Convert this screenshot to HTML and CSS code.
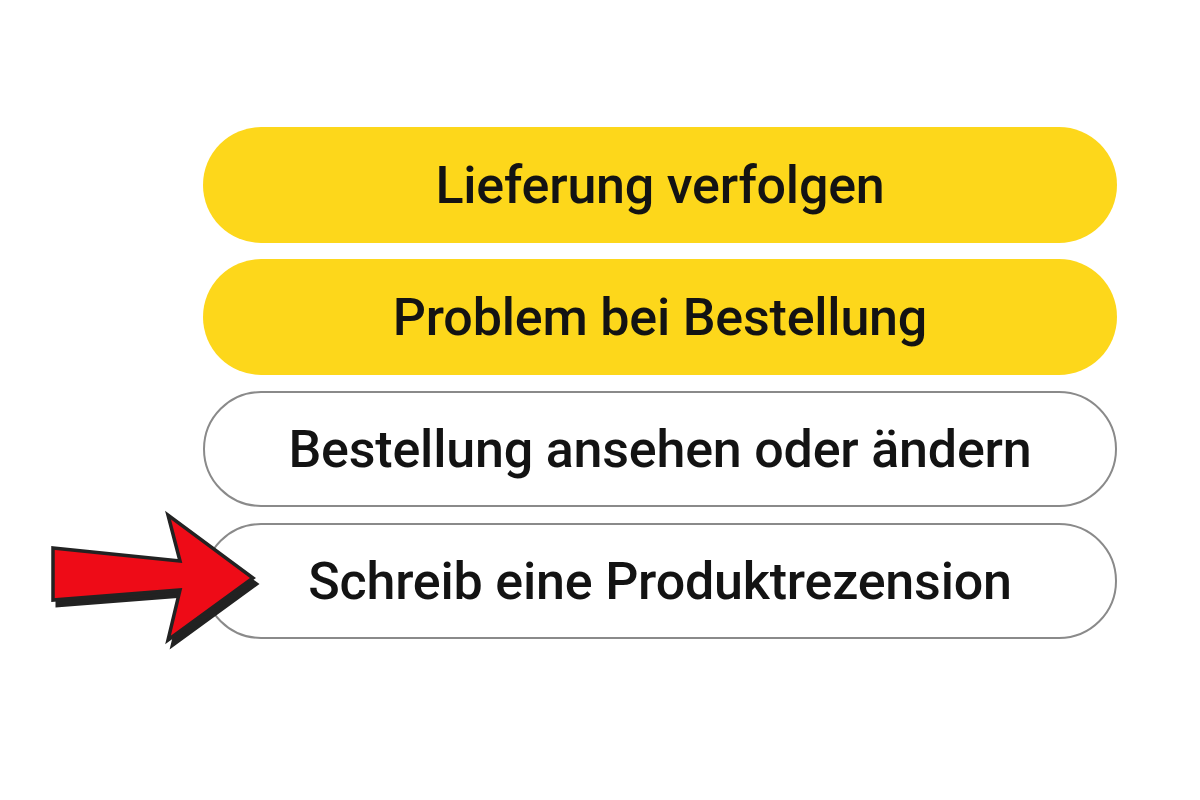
FILE: index.html
```html
<!DOCTYPE html>
<html lang="de">
<head>
<meta charset="utf-8">
<title>Bestellung</title>
<link rel="stylesheet" href="styles.css">
</head>
<body>
<main class="page">
  <div class="actions">
    <button class="btn btn-primary">Lieferung verfolgen</button>
    <button class="btn btn-primary">Problem bei Bestellung</button>
    <button class="btn btn-secondary">Bestellung ansehen oder ändern</button>
    <button class="btn btn-secondary">Schreib eine Produktrezension</button>
  </div>
  <svg class="arrow" viewBox="40 505 230 145" width="230" height="145" aria-hidden="true">
    <polygon class="arrow-shadow" points="53,548 180,561 168,515 253,578 168,640 180,590 53,600" transform="translate(4,6)"/>
    <polygon class="arrow-body" points="53,548 180,561 168,515 253,578 168,640 180,590 53,600"/>
  </svg>
</main>
</body>
</html>
```
FILE: styles.css
```css
html, body {
  margin: 0;
  padding: 0;
  background: #ffffff;
}

.page {
  position: relative;
  width: 1200px;
  height: 800px;
  overflow: hidden;
}

.actions {
  display: flex;
  flex-direction: column;
  gap: 16px;
  width: 914px;
  margin-left: 203px;
  padding-top: 127px;
}

.btn {
  box-sizing: border-box;
  height: 116px;
  border-radius: 58px;
  font-family: Roboto, "Liberation Sans", sans-serif;
  font-size: 52px;
  font-weight: 500;
  letter-spacing: -0.2px;
  color: #131313;
  display: flex;
  align-items: center;
  justify-content: center;
  padding: 0;
  margin: 0;
}

.btn-primary {
  background: #fdd71b;
  border: none;
}

.btn-secondary {
  background: #ffffff;
  border: 2.5px solid #8a8a8a;
}

.arrow {
  position: absolute;
  left: 40px;
  top: 505px;
}

.arrow-shadow {
  fill: #222222;
  stroke: #222222;
  stroke-width: 3;
  stroke-linejoin: miter;
}

.arrow-body {
  fill: #ee0b17;
  stroke: #222222;
  stroke-width: 3.5;
  stroke-linejoin: miter;
}
```
